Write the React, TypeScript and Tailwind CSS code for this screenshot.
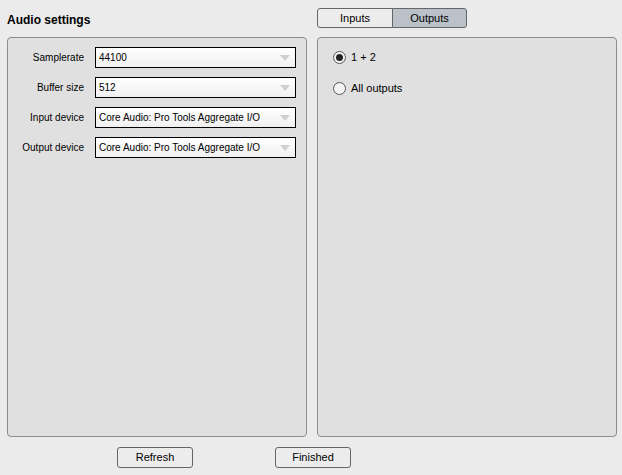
import React from "react";

const rows = [
  { label: "Samplerate", value: "44100" },
  { label: "Buffer size", value: "512" },
  { label: "Input device", value: "Core Audio: Pro Tools Aggregate I/O" },
  { label: "Output device", value: "Core Audio: Pro Tools Aggregate I/O" },
];

function Select({ value }: { value: string }) {
  return (
    <div className="flex h-[21px] w-[201px] items-center justify-between border border-black bg-gradient-to-b from-white to-[#f0f0f0] pl-[3px] pr-[5px]">
      <span className="whitespace-nowrap text-[10px] leading-none text-black">{value}</span>
      <svg width="10" height="6" viewBox="0 0 10 6">
        <path d="M0 0h10L5 6z" fill="#cfcfcf" />
      </svg>
    </div>
  );
}

function Radio({ checked, label }: { checked?: boolean; label: string }) {
  return (
    <div className="flex items-center gap-[5px]">
      <div className="flex h-[13px] w-[13px] items-center justify-center rounded-full border border-[#555] bg-[#f4f4f4]">
        {checked && <div className="h-[7px] w-[7px] rounded-full bg-[#222]" />}
      </div>
      <span className="text-[11px] leading-none text-black">{label}</span>
    </div>
  );
}

export default function App() {
  return (
    <div
      className="flex h-[475px] w-[622px] flex-col bg-[#ebebeb] text-black"
      style={{ fontFamily: '"Liberation Sans", Arial, sans-serif' }}
    >
      <div className="flex h-[37px]">
        <div className="w-[310px] pl-[7px] pt-[11px] text-[12px] font-bold">Audio settings</div>
        <div className="flex pl-[7px] pt-[8px]">
          <button className="h-[20px] w-[76px] rounded-l-[3px] border border-[#666] bg-[#ececec] text-[11px]">
            Inputs
          </button>
          <button className="-ml-px h-[20px] w-[75px] rounded-r-[3px] border border-[#666] bg-[#bac1c9] text-[11px]">
            Outputs
          </button>
        </div>
      </div>

      <div className="flex h-[400px] gap-[10px] pl-[7px]">
        <div className="flex w-[300px] flex-col gap-[9px] rounded-[4px] border border-[#8c8c8c] bg-[#e0e0e0] pt-[9px]">
          {rows.map((r) => (
            <div key={r.label} className="flex items-center">
              <div className="w-[87px] whitespace-nowrap pr-[11px] text-right text-[10px] leading-none">
                {r.label}
              </div>
              <Select value={r.value} />
            </div>
          ))}
        </div>
        <div className="flex w-[300px] flex-col gap-[18px] rounded-[4px] border border-[#8c8c8c] bg-[#e0e0e0] pl-[15px] pt-[13px]">
          <Radio checked label="1 + 2" />
          <Radio label="All outputs" />
        </div>
      </div>

      <div className="flex pt-[10px]">
        <button className="ml-[117px] h-[21px] w-[76px] rounded-[3px] border border-[#666] bg-[#ececec] text-[11px]">
          Refresh
        </button>
        <button className="ml-[82px] h-[21px] w-[76px] rounded-[3px] border border-[#666] bg-[#ececec] text-[11px]">
          Finished
        </button>
      </div>
    </div>
  );
}
